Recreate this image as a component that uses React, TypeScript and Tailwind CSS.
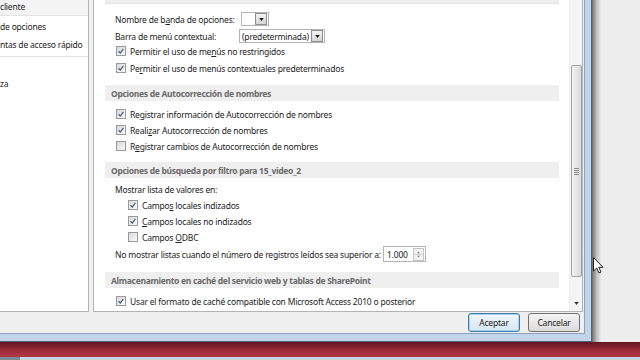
import type { ReactNode } from "react";

const Check = ({ on }: { on: boolean }) => (
  <span className="flex h-[10px] w-[10px] shrink-0 items-center justify-center border border-[#9a9a9a] bg-linear-to-br from-[#d8d8d8] to-[#fbfbfb]">
    {on && (
      <svg viewBox="0 0 10 10" className="h-[8px] w-[8px]">
        <path d="M2 5.3 L4.1 7.6 L8 2.4" fill="none" stroke="#43587a" strokeWidth="1.5" />
      </svg>
    )}
  </span>
);

const CheckRow = ({ on, indent, children, className = "" }: { on: boolean; indent?: boolean; children: ReactNode; className?: string }) => (
  <div className={`flex h-[16px] items-center gap-[4px] ${indent ? "pl-[34px]" : "pl-[22px]"} ${className}`}>
    <Check on={on} />
    <span className="pt-[2px]">{children}</span>
  </div>
);

const Header = ({ children, className = "" }: { children?: ReactNode; className?: string }) => (
  <div className={`ml-[11px] flex h-[16px] w-[454px] shrink-0 items-center bg-[#efefef] pl-[6px] pt-[2px] font-bold tracking-[-0.3px] text-[#6a6a6a] ${className}`}>
    {children}
  </div>
);

const DropBtn = () => (
  <span className="flex h-[12px] w-[12px] shrink-0 items-center justify-center border border-[#8e8e8e] bg-linear-to-b from-[#f4f4f4] to-[#d4d4d4]">
    <svg viewBox="0 0 6 4" className="h-[3px] w-[5px]">
      <path d="M0 0 H6 L3 4 Z" fill="#111" />
    </svg>
  </span>
);

const Cursor = () => (
  <svg viewBox="0 0 11 17" className="absolute left-[593px] top-[257px] h-[17px] w-[11px]">
    <path d="M0.5 0.5 V14 L3.7 11 L6 16 L8 15 L5.8 10.3 H10 Z" fill="#fff" stroke="#222" strokeWidth="1" strokeLinejoin="round" />
  </svg>
);

export default function App() {
  return (
    <div className="relative flex h-[360px] w-[640px] flex-col overflow-hidden bg-[#ececec] font-['Noto_Sans',sans-serif] text-[8.5px] leading-none tracking-[-0.2px] text-[#222]">
      <div className="flex h-[342px]">
        {/* dialog frame */}
        <div className="flex border-b border-r border-[#4e6378] bg-[#c0d4ea] pb-[6px] pr-[6px]">
          <div className="flex h-[334px] w-[585px] flex-col border-b border-r border-[#8aa1ba] bg-[#f0f0f0]">
            <div className="flex h-[312px] gap-[4px]">
              {/* left nav */}
              <div className="flex w-[89px] flex-col whitespace-nowrap border-b border-r border-[#b4b4b4] bg-white">
                <div className="flex h-[16px] items-center border-b border-[#e2e2e2] bg-[#f4f4f4]">cliente</div>
                <div className="mt-[2px] flex h-[18px] items-center">de opciones</div>
                <div className="flex h-[18px] items-center">ntas de acceso rápido</div>
                <div className="mt-[2px] border-b border-[#e2e2e2]" />
                <div className="flex h-[18px] items-center" />
                <div className="flex h-[18px] items-center">za</div>
              </div>

              {/* right options */}
              <div className="flex w-[490px] border-b border-l border-r border-[#b4b4b4] bg-white">
                <div className="flex flex-1 flex-col overflow-hidden whitespace-nowrap">
                  <Header className="-mt-[12px] border-b border-[#e4e4e4]" />

                  <div className="mt-[8px] flex h-[14px] items-center pl-[21px]">
                    <span className="w-[126px] pt-[2px]">
                      Nombre de b<u>a</u>nda de opciones:
                    </span>
                    <span className="flex h-[14px] items-center gap-[1px] border border-[#b5b5b5] bg-white pl-[13px] pr-[1px]">
                      <DropBtn />
                    </span>
                  </div>
                  <div className="mt-[3px] flex h-[14px] items-center pl-[21px]">
                    <span className="w-[124px] pt-[2px]">Barra de menú contextual:</span>
                    <span className="flex h-[14px] w-[86px] items-center justify-between border border-[#b5b5b5] bg-white pl-[2px] pr-[1px]">
                      <span className="pt-[2px]">(predeterminada)</span>
                      <DropBtn />
                    </span>
                  </div>
                  <CheckRow on>
                    Permitir el uso de me<u>n</u>ús no restringidos
                  </CheckRow>
                  <CheckRow on className="mt-[1px]">
                    Pe<u>r</u>mitir el uso de menús contextuales predeterminados
                  </CheckRow>

                  <Header className="mt-[9px]">Opciones de Autocorrección de nombres</Header>
                  <CheckRow on className="mt-[5px]">
                    Re<u>g</u>istrar información de Autocorrección de nombres
                  </CheckRow>
                  <CheckRow on>
                    Reali<u>z</u>ar Autocorrección de nombres
                  </CheckRow>
                  <CheckRow on={false}>
                    R<u>e</u>gistrar cambios de Autocorrección de nombres
                  </CheckRow>

                  <Header className="mt-[8px]">Opciones de búsqueda por filtro para 15_video_2</Header>
                  <div className="mt-[3px] flex h-[16px] items-center pl-[21px] pt-[2px]">Mostrar lista de valores en:</div>
                  <CheckRow on indent>
                    Campo<u>s</u> locales indizados
                  </CheckRow>
                  <CheckRow on indent>
                    <u>C</u>ampos locales no indizados
                  </CheckRow>
                  <CheckRow on={false} indent>
                    Campos <u>O</u>DBC
                  </CheckRow>
                  <div className="mt-[1px] flex h-[16px] items-center pl-[21px]">
                    <span className="w-[268px] pt-[2px]">No mostrar listas cuando el número de registros leídos sea superior a:</span>
                    <span className="flex h-[16px] w-[43px] items-center justify-between border border-[#b5b5b5] bg-white pl-[3px] pr-[1px]">
                      <span className="pt-[2px]">1.000</span>
                      <span className="flex h-[13px] w-[11px] flex-col border border-[#c4c4c4] bg-[#f2f2f2]">
                        <svg viewBox="0 0 11 13" className="h-full w-full">
                          <path d="M3.5 5 L5.5 3 L7.5 5 Z" fill="#777" />
                          <path d="M0 6.5 H11" stroke="#c9c9c9" strokeWidth="1" />
                          <path d="M3.5 8 L5.5 10 L7.5 8 Z" fill="#777" />
                        </svg>
                      </span>
                    </span>
                  </div>

                  <Header className="mt-[10px]">Almacenamiento en caché del servicio web y tablas de SharePoint</Header>
                  <CheckRow on className="mt-[5px]">
                    Usar el formato de caché compatible con Microsoft Access 2010 o posterior
                  </CheckRow>
                </div>

                {/* scrollbar */}
                <div className="flex w-[13px] flex-col items-center border-l border-[#ececec] bg-[#f5f5f5]">
                  <div className="mt-[65px] flex h-[212px] w-[11px] items-center justify-center rounded-[2px] border border-[#a3a3a3] bg-linear-to-r from-[#f3f3f3] to-[#d9d9d9]">
                    <div className="flex flex-col gap-[1px]">
                      <span className="h-[1px] w-[5px] bg-[#8a8a8a]" />
                      <span className="h-[1px] w-[5px] bg-[#8a8a8a]" />
                      <span className="h-[1px] w-[5px] bg-[#8a8a8a]" />
                      <span className="h-[1px] w-[5px] bg-[#8a8a8a]" />
                    </div>
                  </div>
                  <svg viewBox="0 0 6 4" className="mt-[25px] h-[3px] w-[5px]">
                    <path d="M0 0 H6 L3 4 Z" fill="#333" />
                  </svg>
                </div>
              </div>
            </div>

            {/* buttons */}
            <div className="flex justify-end gap-[8px] pr-[4px] pt-[1px]">
              <button className="flex h-[19px] w-[52px] items-center justify-center rounded-[3px] border border-[#3d7bad] bg-linear-to-b from-[#f2f7fb] to-[#d6e6f2] pt-[1px] shadow-[inset_0_0_0_1px_#a8d2ef]">
                Aceptar
              </button>
              <button className="flex h-[19px] w-[52px] items-center justify-center rounded-[3px] border border-[#707070] bg-linear-to-b from-[#f4f4f4] to-[#dcdcdc] pt-[1px]">
                Cancelar
              </button>
            </div>
          </div>
        </div>
        {/* window shadow */}
        <div className="w-[9px] bg-linear-to-r from-[#6f6f6f] via-[#bdbdbd] to-[#ebebeb]" />
        <div className="flex-1 bg-[#ededed]" />
      </div>
      <div className="h-[15px] bg-linear-to-b from-[#5e1520] via-[#9a2a38] to-[#b03846]" />
      <div className="flex h-[3px]">
        <div className="w-[20px] bg-[#7b8a96]" />
        <div className="flex-1 bg-[#c6d4e0]" />
      </div>
      <Cursor />
    </div>
  );
}
